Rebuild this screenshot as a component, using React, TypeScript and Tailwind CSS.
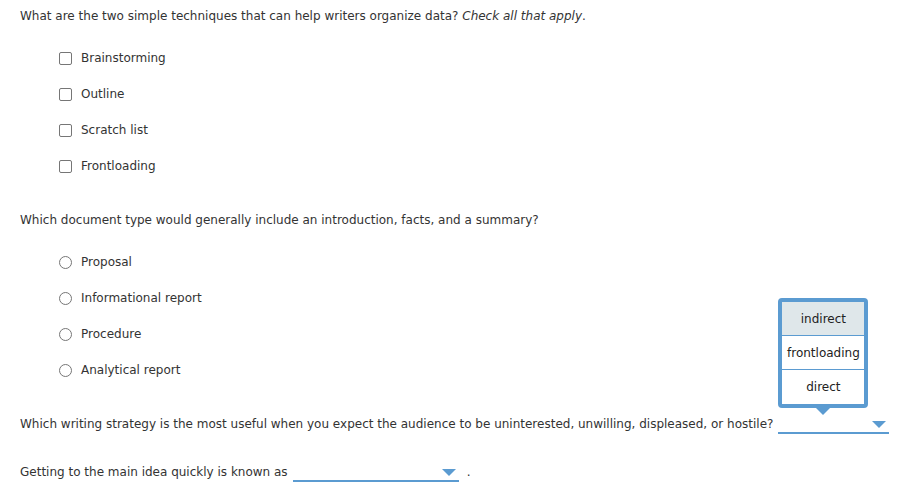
import React from 'react';

const font = { fontFamily: '"DejaVu Sans", Verdana, sans-serif' };

function CheckRow({ label }: { label: string }) {
    return (
        <div className="flex h-[36px] items-center pl-[39px]">
            <span className="box-border h-[13px] w-[13px] rounded-[2px] border border-[#767676] bg-white" />
            <span className="ml-[9px]">{label}</span>
        </div>
    );
}

function RadioRow({ label }: { label: string }) {
    return (
        <div className="flex h-[36px] items-center pl-[39px]">
            <span className="box-border h-[13px] w-[13px] rounded-full border border-[#767676] bg-white" />
            <span className="ml-[9px]">{label}</span>
        </div>
    );
}

function Caret() {
    return (
        <svg width="14" height="7" viewBox="0 0 14 7" className="block">
            <path d="M0 0 L14 0 L7 7 Z" fill="#5b9bd1" />
        </svg>
    );
}

function Dropdown({ width, open }: { width: string; open?: boolean }) {
    return (
        <span className={`relative inline-flex h-[20px] ${width} items-start justify-end border-b-2 border-[#5b9bd1] pt-[7px] pr-[3px]`}>
            <Caret />
            {open && (
                <div className="absolute bottom-[24px] left-0 w-[90px]">
                    <div className="box-border flex flex-col overflow-hidden rounded-[4px] border-4 border-[#5b9bd1] bg-white text-[#222]">
                        <div className="flex h-[33px] items-center justify-center bg-[#dfe7ea]">indirect</div>
                        <div className="h-px bg-[#5b9bd1]" />
                        <div className="flex h-[33px] items-center justify-center">frontloading</div>
                        <div className="h-px bg-[#5b9bd1]" />
                        <div className="flex h-[34px] items-center justify-center">direct</div>
                    </div>
                    <svg width="14" height="7" viewBox="0 0 14 7" className="absolute left-[38px] top-full block">
                        <path d="M0 0 L14 0 L7 7 Z" fill="#5b9bd1" />
                    </svg>
                </div>
            )}
        </span>
    );
}

export default function App() {
    return (
        <div className="min-h-[488px] w-[912px] bg-white px-[20px] pt-[7px] text-[12px] text-[#333]" style={font}>
            <div className="flex h-[18px] items-center">
                What are the two simple techniques that can help writers organize data?&nbsp;
                <i>Check all that apply</i>.
            </div>

            <div className="mt-[15px] flex flex-col">
                <CheckRow label="Brainstorming" />
                <CheckRow label="Outline" />
                <CheckRow label="Scratch list" />
                <CheckRow label="Frontloading" />
            </div>

            <div className="mt-[27px] flex h-[18px] items-center">
                Which document type would generally include an introduction, facts, and a summary?
            </div>

            <div className="mt-[15px] flex flex-col">
                <RadioRow label="Proposal" />
                <RadioRow label="Informational report" />
                <RadioRow label="Procedure" />
                <RadioRow label="Analytical report" />
            </div>

            <div className="mt-[26px] flex h-[20px] items-center">
                <span className="mr-[5px]">
                    Which writing strategy is the most useful when you expect the audience to be uninterested, unwilling, displeased, or hostile?
                </span>
                <Dropdown width="w-[111px]" open />
            </div>

            <div className="mt-[28px] flex h-[20px] items-center">
                <span className="mr-[5px]">Getting to the main idea quickly is known as</span>
                <Dropdown width="w-[166px]" />
                <span className="ml-[8px]">.</span>
            </div>
        </div>
    );
}
